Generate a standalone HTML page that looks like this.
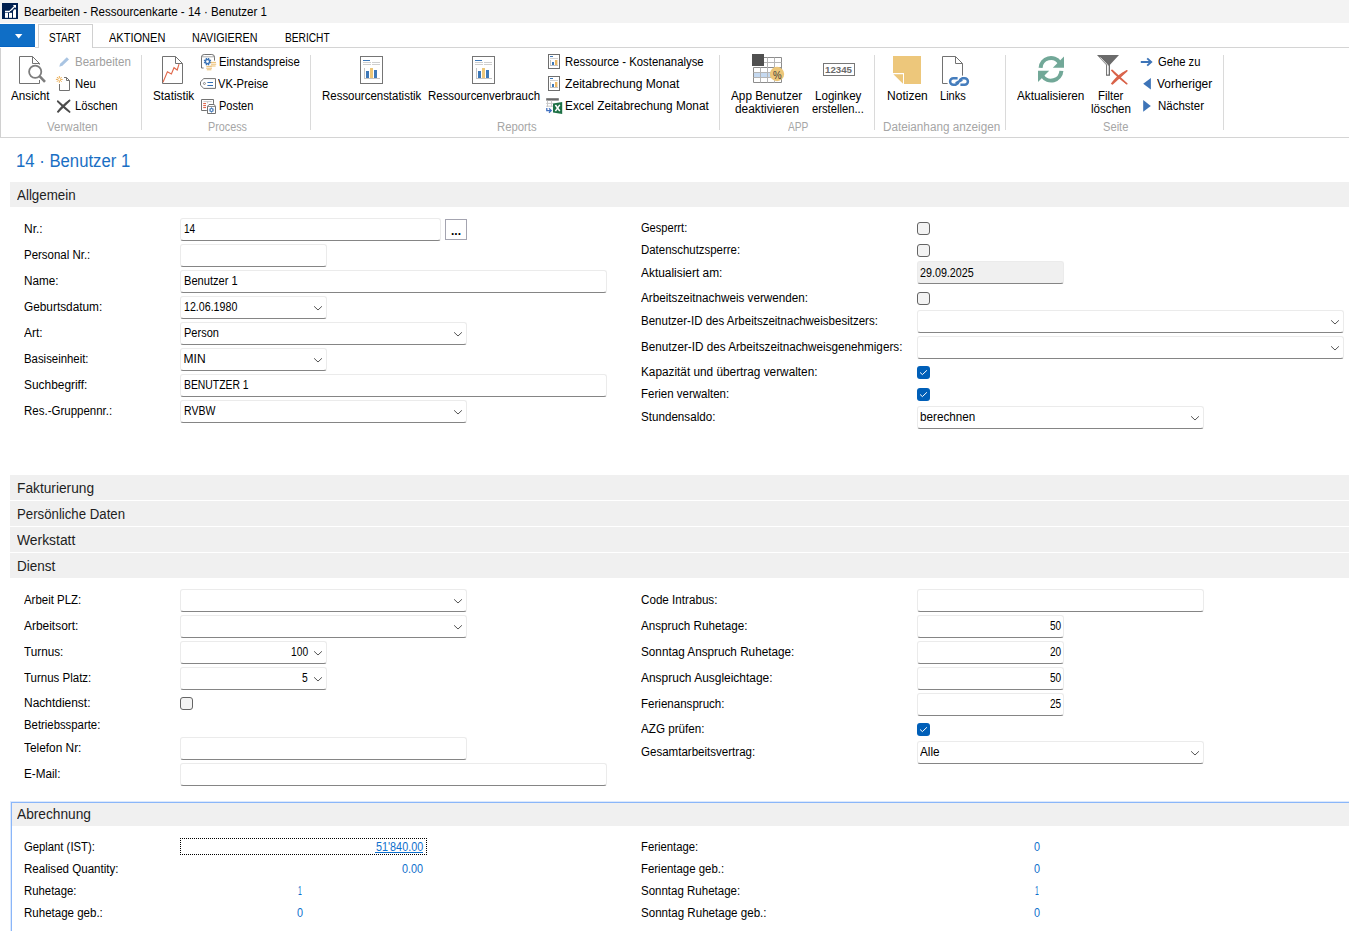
<!DOCTYPE html>
<html lang="de"><head><meta charset="utf-8"><title>Bearbeiten - Ressourcenkarte - 14 · Benutzer 1</title>
<style>
html,body{margin:0;padding:0;background:#fff;}
body{width:1349px;height:931px;position:relative;overflow:hidden;font-family:"Liberation Sans",sans-serif;}
.a{position:absolute;box-sizing:border-box;}
.t{position:absolute;white-space:pre;transform-origin:0 50%;display:block;}
.f{position:absolute;box-sizing:border-box;background:#fff;border:1px solid #ebebeb;border-bottom:1px solid #858585;border-radius:3px;}
.cb{position:absolute;box-sizing:border-box;width:13px;height:13px;border:1px solid #646464;border-radius:3px;background:#f3f3f3;}
.cbc{position:absolute;box-sizing:border-box;width:13px;height:13px;border-radius:3px;background:#005fb8;}
svg{position:absolute;overflow:visible;}
</style></head>
<body>
<div class="a" style="left:0px;top:0px;width:1349px;height:23px;background:#f3f3f3;"></div>
<svg style="left:2px;top:3px" width="16" height="16" viewBox="0 0 16 16"><rect width="16" height="16" fill="#002050"/><rect x="3" y="9.8" width="3" height="5" fill="#fff"/><rect x="7" y="9.8" width="3" height="5" fill="#fff"/><rect x="11" y="6.4" width="3" height="8.4" fill="#fff"/><path d="M3 8.5 H7.6 L12.8 3.2" stroke="#fff" stroke-width="1.3" fill="none"/><path d="M10.8 2 H14 V5.2 Z" fill="#fff"/><path d="M7.6 9.4 L9.4 7.6 M10.6 8.4 L11.8 5.6" stroke="#002050" stroke-width="0.9" fill="none"/></svg>
<span class="t" style="left:23.60px;top:4px;font-size:12px;line-height:17px;color:#000;transform:scaleX(0.9637);">Bearbeiten - Ressourcenkarte - 14 · Benutzer 1</span>
<div class="a" style="left:35px;top:47px;width:1314px;height:1px;background:#d4d4d4;"></div>
<div class="a" style="left:0px;top:24px;width:35px;height:23px;background:#0f6ec6;border-bottom:1px solid #0563c1;"></div>
<svg style="left:15px;top:34px" width="7.4" height="4.6" viewBox="0 0 7.4 4.6"><path d="M0 0 H7.4 L3.7 4.6 Z" fill="#fff"/></svg>
<div class="a" style="left:38px;top:24px;width:55px;height:24px;background:#fff;border:1px solid #d0d0d0;border-bottom:none;"></div>
<span class="t" style="left:49.20px;top:29px;font-size:13px;line-height:18px;color:#000;transform:scaleX(0.7681);">START</span>
<span class="t" style="left:108.60px;top:29px;font-size:13px;line-height:18px;color:#000;transform:scaleX(0.8488);">AKTIONEN</span>
<span class="t" style="left:192.20px;top:29px;font-size:13px;line-height:18px;color:#000;transform:scaleX(0.8258);">NAVIGIEREN</span>
<span class="t" style="left:285.00px;top:29px;font-size:13px;line-height:18px;color:#000;transform:scaleX(0.7818);">BERICHT</span>
<div class="a" style="left:0px;top:48px;width:1px;height:90px;background:#d0d0d0;"></div>
<div class="a" style="left:0px;top:137px;width:1349px;height:1px;background:#d4d4d4;"></div>
<div class="a" style="left:141px;top:55px;width:1px;height:75px;background:#dadada;"></div>
<div class="a" style="left:310px;top:55px;width:1px;height:75px;background:#dadada;"></div>
<div class="a" style="left:719px;top:55px;width:1px;height:75px;background:#dadada;"></div>
<div class="a" style="left:874px;top:55px;width:1px;height:75px;background:#dadada;"></div>
<div class="a" style="left:1005px;top:55px;width:1px;height:75px;background:#dadada;"></div>
<div class="a" style="left:1223px;top:55px;width:1px;height:75px;background:#dadada;"></div>
<span class="t" style="left:46.60px;top:119px;font-size:12px;line-height:17px;color:#a6a6a6;transform:scaleX(0.9639);">Verwalten</span>
<span class="t" style="left:208.00px;top:119px;font-size:12px;line-height:17px;color:#a6a6a6;transform:scaleX(0.8997);">Process</span>
<span class="t" style="left:496.60px;top:119px;font-size:12px;line-height:17px;color:#a6a6a6;transform:scaleX(0.9429);">Reports</span>
<span class="t" style="left:788.20px;top:119px;font-size:12px;line-height:17px;color:#a6a6a6;transform:scaleX(0.8500);">APP</span>
<span class="t" style="left:882.80px;top:119px;font-size:12px;line-height:17px;color:#a6a6a6;transform:scaleX(0.9759);">Dateianhang anzeigen</span>
<span class="t" style="left:1103.00px;top:119px;font-size:12px;line-height:17px;color:#a6a6a6;transform:scaleX(0.9287);">Seite</span>
<span class="t" style="left:11.40px;top:88px;font-size:12px;line-height:17px;color:#000;transform:scaleX(0.9759);">Ansicht</span>
<span class="t" style="left:74.60px;top:54px;font-size:12px;line-height:17px;color:#a0a0a0;transform:scaleX(0.9612);">Bearbeiten</span>
<span class="t" style="left:74.60px;top:76px;font-size:12px;line-height:17px;color:#000;transform:scaleX(0.9455);">Neu</span>
<span class="t" style="left:74.60px;top:98px;font-size:12px;line-height:17px;color:#000;transform:scaleX(0.9350);">Löschen</span>
<span class="t" style="left:152.80px;top:88px;font-size:12px;line-height:17px;color:#000;transform:scaleX(0.9798);">Statistik</span>
<span class="t" style="left:218.60px;top:54px;font-size:12px;line-height:17px;color:#000;transform:scaleX(0.9461);">Einstandspreise</span>
<span class="t" style="left:218.20px;top:76px;font-size:12px;line-height:17px;color:#000;transform:scaleX(0.9296);">VK-Preise</span>
<span class="t" style="left:218.60px;top:98px;font-size:12px;line-height:17px;color:#000;transform:scaleX(0.9210);">Posten</span>
<span class="t" style="left:322.20px;top:88px;font-size:12px;line-height:17px;color:#000;transform:scaleX(0.9549);">Ressourcenstatistik</span>
<span class="t" style="left:428.40px;top:88px;font-size:12px;line-height:17px;color:#000;transform:scaleX(0.9540);">Ressourcenverbrauch</span>
<span class="t" style="left:564.80px;top:54px;font-size:12px;line-height:17px;color:#000;transform:scaleX(0.9445);">Ressource - Kostenanalyse</span>
<span class="t" style="left:564.60px;top:76px;font-size:12px;line-height:17px;color:#000;transform:scaleX(1.0088);">Zeitabrechung Monat</span>
<span class="t" style="left:565.00px;top:98px;font-size:12px;line-height:17px;color:#000;transform:scaleX(0.9843);">Excel Zeitabrechung Monat</span>
<span class="t" style="left:731.20px;top:88px;font-size:12px;line-height:17px;color:#000;transform:scaleX(0.9794);">App Benutzer</span>
<span class="t" style="left:735.20px;top:101px;font-size:12px;line-height:17px;color:#000;transform:scaleX(0.9892);">deaktivieren</span>
<span class="t" style="left:814.60px;top:88px;font-size:12px;line-height:17px;color:#000;transform:scaleX(0.9657);">Loginkey</span>
<span class="t" style="left:812.20px;top:101px;font-size:12px;line-height:17px;color:#000;transform:scaleX(0.9359);">erstellen...</span>
<span class="t" style="left:886.80px;top:88px;font-size:12px;line-height:17px;color:#000;transform:scaleX(1.0025);">Notizen</span>
<span class="t" style="left:940.20px;top:88px;font-size:12px;line-height:17px;color:#000;transform:scaleX(0.9214);">Links</span>
<span class="t" style="left:1017.00px;top:88px;font-size:12px;line-height:17px;color:#000;transform:scaleX(0.9811);">Aktualisieren</span>
<span class="t" style="left:1097.60px;top:88px;font-size:12px;line-height:17px;color:#000;transform:scaleX(0.9531);">Filter</span>
<span class="t" style="left:1091.20px;top:101px;font-size:12px;line-height:17px;color:#000;transform:scaleX(0.9674);">löschen</span>
<span class="t" style="left:1157.60px;top:54px;font-size:12px;line-height:17px;color:#000;transform:scaleX(0.9350);">Gehe zu</span>
<span class="t" style="left:1157.40px;top:76px;font-size:12px;line-height:17px;color:#000;transform:scaleX(0.9973);">Vorheriger</span>
<span class="t" style="left:1157.60px;top:98px;font-size:12px;line-height:17px;color:#000;transform:scaleX(0.9583);">Nächster</span>
<svg style="left:0px;top:0px" width="1349" height="140" viewBox="0 0 1349 140">
<g fill="none" stroke="#727272" stroke-width="1">
<path d="M39.5 64.5 V63.5 L32.5 56.5 H19.5 V83.5 H39.5 V80"/>
<path d="M32.5 56.5 V63.5 H39.5"/>
</g>
<circle cx="35.2" cy="71.8" r="6.1" fill="#fff" stroke="#7d7d7d" stroke-width="1.8"/>
<path d="M39.8 76.4 L45 81.8" stroke="#7d7d7d" stroke-width="2.6" fill="none"/>
<!-- pencil -->
<path d="M61 65 L67.9 58.3" stroke="#a9c4e2" stroke-width="3.1" fill="none"/>
<path d="M59.3 66.7 L60.2 63.6 L62.4 65.8 Z" fill="#a9c4e2"/>
<!-- Neu -->
<path d="M59.5 84 V90.5 H69.5 V80.5 L66.5 77.5 H64" fill="none" stroke="#727272" stroke-width="1"/>
<path d="M66.5 77.5 V80.5 H69.5" fill="none" stroke="#727272" stroke-width="1"/>
<g stroke="#e8a33d" stroke-width="0.9" fill="none"><path d="M59.3 76 V82.8 M55.9 79.4 H62.7 M56.9 77 L61.7 81.8 M61.7 77 L56.9 81.8"/></g>
<circle cx="59.3" cy="79.4" r="1.1" fill="#fff"/>
<!-- Loeschen X -->
<path d="M57.6 100.2 C61 103.5 66 108 70.6 112.4 L69.4 112.8 C65 109.5 60.5 105.5 56.8 101.4 Z" fill="#4d4d4d"/>
<path d="M70.4 100 C66.5 103.5 61.5 108 58.6 112.6 L56.8 112.2 C59.5 108 64.5 103 69.6 99.6 Z" fill="#4d4d4d"/>
<path d="M57.4 100.8 L70 112.2" stroke="#4d4d4d" stroke-width="1.6"/>
<path d="M70 100.2 L57.6 112.2" stroke="#4d4d4d" stroke-width="1.8"/>

<!-- Statistik -->
<g fill="none" stroke="#727272" stroke-width="1">
<path d="M162.5 56.5 H175.5 L182.5 63.5 V83.5 H162.5 Z"/>
<path d="M175.5 56.5 V63.5 H182.5"/>
</g>
<path d="M163 82.3 L167.4 71.8 L171.4 74 L174 67.7 L177.2 70 L179 64.2" fill="none" stroke="#e0674a" stroke-width="1.1"/>

<!-- Einstandspreise -->
<path d="M203.6 68 H201.5 V57.2 Q201.5 54.5 204.2 54.5 H211.8 Q214.5 54.5 214.5 57.2 V60.6" fill="none" stroke="#727272" stroke-width="1"/>
<path d="M201.5 56.8 H214.5" stroke="#727272" stroke-width="0.6" fill="none"/>
<circle cx="207.5" cy="61.6" r="2.1" fill="none" stroke="#3c74b6" stroke-width="1.4"/>
<g stroke="#3c74b6" stroke-width="1.3"><path d="M206.4 58 V59.6 M208.6 58 V59.6 M206.4 63.6 V65.2 M208.6 63.6 V65.2 M203.9 60.5 H205.5 M203.9 62.7 H205.5 M209.5 60.5 H211.1 M209.5 62.7 H211.1"/></g>
<g stroke="#e9b55f" stroke-width="0.9" fill="none"><path d="M210.6 62.4 H216 M211 64.2 H216.2 M210.6 66 H215.6 M206.4 66.4 H211.6 M206.2 68.2 H212 M206.8 69.8 H211.4"/></g>

<!-- VK-Preise tag -->
<path d="M200.5 81.8 L203.8 78.6 H215.5 V88.4 H203.8 L200.5 85.2 Z" fill="none" stroke="#727272" stroke-width="1" stroke-linejoin="round"/>
<circle cx="204.4" cy="83.5" r="1" fill="none" stroke="#727272" stroke-width="0.8"/>
<path d="M207.4 82.5 H213 M207.4 85.5 H213" stroke="#3570b4" stroke-width="1" fill="none"/>

<!-- Posten -->
<path d="M206.8 110.5 H201.5 V99.5 H213.5 V103.8" fill="none" stroke="#727272" stroke-width="1"/>
<path d="M203.4 101.6 H211.6" stroke="#bdbdbd" stroke-width="0.8"/>
<path d="M207.6 101.6 V103.4" stroke="#bdbdbd" stroke-width="0.8"/>
<path d="M203.2 103.6 H206 M203.2 105.6 H206 M203.2 107.6 H206" stroke="#e05a3c" stroke-width="1"/>
<path d="M207.5 113.5 V106.4 L209 104.5 H214.2 L215.5 106.4 V113.5 Z" fill="#fff" stroke="#727272" stroke-width="1"/>
<path d="M207.5 106.5 H215.5" stroke="#727272" stroke-width="0.8"/>
<circle cx="211.5" cy="110" r="1.5" fill="none" stroke="#3c74b6" stroke-width="1.1"/>
<g stroke="#3c74b6" stroke-width="0.9"><path d="M211.5 107.4 V108.2 M211.5 111.8 V112.6 M208.9 110 H209.7 M213.3 110 H214.1 M209.7 108.2 L210.2 108.7 M213.3 108.2 L212.8 108.7 M209.7 111.8 L210.2 111.3 M213.3 111.8 L212.8 111.3"/></g>
</svg>
<svg style="left:360px;top:56px" width="23" height="28" viewBox="0 0 23 28"><rect x="0.5" y="0.5" width="22" height="27" fill="#fff" stroke="#757575" stroke-width="1"/>
<rect x="3" y="4" width="7" height="1" fill="#3d78b8"/>
<rect x="3" y="6" width="8" height="1" fill="#cfcfcf"/><rect x="12" y="6" width="8" height="1" fill="#cfcfcf"/>
<rect x="3" y="8" width="8" height="1" fill="#cfcfcf"/><rect x="12" y="8" width="8" height="1" fill="#cfcfcf"/>
<rect x="4" y="12" width="1" height="11" fill="#c4c4c4"/><rect x="4" y="22" width="16" height="1" fill="#c4c4c4"/>
<rect x="6" y="15" width="3" height="7" fill="#3d78b8"/><rect x="10" y="12" width="3" height="10" fill="#ecc678"/><rect x="14" y="14" width="3" height="8" fill="#3d78b8"/></svg>
<svg style="left:472px;top:56px" width="23" height="28" viewBox="0 0 23 28"><rect x="0.5" y="0.5" width="22" height="27" fill="#fff" stroke="#757575" stroke-width="1"/>
<rect x="3" y="4" width="7" height="1" fill="#3d78b8"/>
<rect x="3" y="6" width="8" height="1" fill="#cfcfcf"/><rect x="12" y="6" width="8" height="1" fill="#cfcfcf"/>
<rect x="3" y="8" width="8" height="1" fill="#cfcfcf"/><rect x="12" y="8" width="8" height="1" fill="#cfcfcf"/>
<rect x="4" y="12" width="1" height="11" fill="#c4c4c4"/><rect x="4" y="22" width="16" height="1" fill="#c4c4c4"/>
<rect x="6" y="15" width="3" height="7" fill="#3d78b8"/><rect x="10" y="12" width="3" height="10" fill="#ecc678"/><rect x="14" y="14" width="3" height="8" fill="#3d78b8"/></svg>
<svg style="left:548px;top:54px" width="12" height="15" viewBox="0 0 12 15"><rect x="0.5" y="0.5" width="11" height="14" fill="#fff" stroke="#6e6e6e" stroke-width="1"/>
<rect x="2" y="2" width="3" height="1" fill="#3d78b8"/>
<rect x="2" y="4" width="8" height="1" fill="#d2d2d2"/>
<rect x="2" y="6" width="1" height="6" fill="#c4c4c4"/><rect x="2" y="11" width="8" height="1" fill="#c4c4c4"/>
<rect x="4" y="8" width="2" height="3" fill="#3d78b8"/><rect x="7" y="6" width="2.4" height="5" fill="#ecb866"/></svg>
<svg style="left:548px;top:76px" width="12" height="15" viewBox="0 0 12 15"><rect x="0.5" y="0.5" width="11" height="14" fill="#fff" stroke="#6e6e6e" stroke-width="1"/>
<rect x="2" y="2" width="3" height="1" fill="#3d78b8"/>
<rect x="2" y="4" width="8" height="1" fill="#d2d2d2"/>
<rect x="2" y="6" width="1" height="6" fill="#c4c4c4"/><rect x="2" y="11" width="8" height="1" fill="#c4c4c4"/>
<rect x="4" y="8" width="2" height="3" fill="#3d78b8"/><rect x="7" y="6" width="2.4" height="5" fill="#ecb866"/></svg>
<svg style="left:546px;top:98px" width="17" height="16" viewBox="0 0 17 16"><rect x="0.2" y="0.2" width="12.6" height="2.4" fill="#6a6a6a"/>
<path d="M1.5 2.6 V9 M5.5 2.6 V9 M0.2 5.4 H7 M0.2 8.2 H7" stroke="#c9c9c9" stroke-width="1" fill="none"/>
<path d="M0.8 10 V12.6 H5 M3 10.4 L5.2 12.6 L3 14.8" stroke="#3f6fc0" stroke-width="1.3" fill="none"/>
<path d="M7 5.4 L16.2 3.9 V15.9 L7 14.4 Z" fill="#1e7145"/>
<path d="M9.4 7 L13.8 13 M13.8 6.8 L9.4 13.2" stroke="#fff" stroke-width="1.5" fill="none"/></svg>
<svg style="left:752px;top:54px" width="33" height="30" viewBox="0 0 33 30"><g fill="none">
<path d="M12 3.5 H29.5 V28.5 H1.5 V13.5 H29.5" stroke="#8c8c8c" stroke-width="1"/>
<path d="M12 8.5 H29.5 M1.5 18.5 H29.5 M1.5 23.5 H29.5 M8.5 13.5 V28.5 M15.5 3.5 V28.5 M22.5 3.5 V28.5" stroke="#b5b5b5" stroke-width="1"/>
</g>
<rect x="2" y="19" width="6" height="4" fill="#c5d9f0"/><rect x="9" y="19" width="6" height="4" fill="#c5d9f0"/><rect x="16" y="19" width="3" height="4" fill="#c5d9f0"/>
<rect x="0" y="0" width="12" height="12" fill="#505050"/>
<circle cx="25" cy="20" r="7.2" fill="#ecc678"/></svg>
<span class="t" style="left:772.80px;top:68px;font-size:11px;line-height:15px;color:#3c3c3c;transform:scaleX(0.8776);">%</span>
<div class="a" style="left:823px;top:63px;width:32px;height:13px;border:1px solid #777;background:#fff;"></div>
<span class="t" style="left:825.20px;top:63px;font-size:9.5px;line-height:13px;color:#6a6a6a;transform:scaleX(1.0227);font-weight:bold;">12345</span>
<svg style="left:893px;top:56px" width="28" height="28" viewBox="0 0 28 28"><rect width="28" height="28" fill="#edc77b"/><path d="M0 17 H11 V28 H0 Z" fill="#fff"/><path d="M0.4 18.2 H10 V27.8 Z" fill="#edc77b"/></svg>
<svg style="left:940px;top:54px" width="32" height="34" viewBox="0 0 32 34"><g fill="none" stroke="#727272" stroke-width="1"><path d="M7.6 29.5 H2.5 V2.5 H15.5 L22.5 9.5 V21.6"/><path d="M15.5 2.5 V9.5 H22.5"/></g>
<g fill="none" stroke="#457dbd" stroke-width="2.5">
<path d="M17.6 24.2 H13.4 a3.3 3.3 0 0 0 0 6.6 H15.6 L18.6 28.8"/>
<path d="M20.4 30.8 H24.6 a3.3 3.3 0 0 0 0 -6.6 H22.4 L19.4 26.2"/>
<path d="M15.8 29.4 L22.2 25.6"/></g></svg>
<svg style="left:1037px;top:55px" width="28" height="28" viewBox="0 0 28 28"><g fill="none" stroke="#72a898" stroke-width="4">
<path d="M3.6 12.8 A10.4 10.4 0 0 1 22.6 7.6"/>
<path d="M24.4 15.8 A10.4 10.4 0 0 1 5.4 21"/>
</g>
<path d="M27 1.6 V12.8 H15.8 Z" fill="#72a898"/>
<path d="M1 27 V15.8 H12.2 Z" fill="#72a898"/></svg>
<svg style="left:1096px;top:54px" width="33" height="32" viewBox="0 0 33 32"><path d="M1 1 H23 L14 10.8 V21.8 H10 V10.8 Z" fill="#6b6b6b"/>
<path d="M11.3 11.4 V20.6 H12.7 V11.4" fill="#fff"/>
<path d="M4.2 3.4 L11.4 10.8 V20.4" fill="none" stroke="#fff" stroke-width="0.9"/>
<path d="M15.6 15.4 C20 19.5 26 25 31.8 30 L30.8 30.6 C25 26.5 19 21.5 15 16.6 Z" fill="#d9634a"/>
<path d="M31.8 16.6 C27 19.5 20.5 24.5 16.6 30.4 L14.8 30 C18 24.5 24.5 18.8 31.2 16 Z" fill="#d9634a"/>
<path d="M15.8 16 L31 30" stroke="#d9634a" stroke-width="1.6"/><path d="M31 16.6 L16 30" stroke="#d9634a" stroke-width="1.7"/></svg>
<svg style="left:1140px;top:56px" width="14" height="58" viewBox="0 0 14 58"><path d="M0.8 6 H11 M7.2 2.4 L11.2 6 L7.2 9.6" fill="none" stroke="#3d74b8" stroke-width="1.9"/>
<path d="M3.2 27.7 L10.9 22 V33.6 Z" fill="#3d74b8"/>
<path d="M3.2 44.1 V55.7 L10.8 49.9 Z" fill="#3d74b8"/></svg>
<span class="t" style="left:16.00px;top:149px;font-size:18px;line-height:25px;color:#1a6fc4;transform:scaleX(0.9277);">14 · Benutzer 1</span>
<div class="a" style="left:10px;top:182px;width:1339px;height:25px;background:#f0f0f0;"></div>
<span class="t" style="left:17.30px;top:185px;font-size:14px;line-height:20px;color:#1e1e1e;transform:scaleX(0.9545);">Allgemein</span>
<div class="a" style="left:10px;top:475px;width:1339px;height:25px;background:#f0f0f0;"></div>
<span class="t" style="left:17.30px;top:478px;font-size:14px;line-height:20px;color:#1e1e1e;transform:scaleX(0.9809);">Fakturierung</span>
<div class="a" style="left:10px;top:501px;width:1339px;height:25px;background:#f0f0f0;"></div>
<span class="t" style="left:17.30px;top:504px;font-size:14px;line-height:20px;color:#1e1e1e;transform:scaleX(0.9441);">Persönliche Daten</span>
<div class="a" style="left:10px;top:527px;width:1339px;height:25px;background:#f0f0f0;"></div>
<span class="t" style="left:17.30px;top:530px;font-size:14px;line-height:20px;color:#1e1e1e;transform:scaleX(0.9907);">Werkstatt</span>
<div class="a" style="left:10px;top:553px;width:1339px;height:25px;background:#f0f0f0;"></div>
<span class="t" style="left:17.30px;top:556px;font-size:14px;line-height:20px;color:#1e1e1e;transform:scaleX(0.9647);">Dienst</span>
<div class="a" style="left:10px;top:801px;width:1340px;height:131px;border:1px solid #dce9fd;border-right:none;border-bottom:none;"></div>
<div class="a" style="left:11px;top:802px;width:1339px;height:130px;border:1px solid #8ab6f9;border-right:none;border-bottom:none;"></div>
<div class="a" style="left:12px;top:803px;width:1337px;height:23px;background:#f0f0f0;"></div>
<span class="t" style="left:17.00px;top:804px;font-size:14px;line-height:20px;color:#1e1e1e;transform:scaleX(0.9801);">Abrechnung</span>
<span class="t" style="left:24.20px;top:221px;font-size:12px;line-height:17px;color:#000;transform:scaleX(0.9973);">Nr.:</span>
<span class="t" style="left:24.20px;top:247px;font-size:12px;line-height:17px;color:#000;transform:scaleX(0.9560);">Personal Nr.:</span>
<span class="t" style="left:24.20px;top:273px;font-size:12px;line-height:17px;color:#000;transform:scaleX(0.9760);">Name:</span>
<span class="t" style="left:24.20px;top:299px;font-size:12px;line-height:17px;color:#000;transform:scaleX(0.9861);">Geburtsdatum:</span>
<span class="t" style="left:24.20px;top:325px;font-size:12px;line-height:17px;color:#000;transform:scaleX(0.9973);">Art:</span>
<span class="t" style="left:24.20px;top:351px;font-size:12px;line-height:17px;color:#000;transform:scaleX(0.9478);">Basiseinheit:</span>
<span class="t" style="left:24.20px;top:377px;font-size:12px;line-height:17px;color:#000;transform:scaleX(0.9922);">Suchbegriff:</span>
<span class="t" style="left:24.20px;top:403px;font-size:12px;line-height:17px;color:#000;transform:scaleX(0.9582);">Res.-Gruppennr.:</span>
<div class="f" style="left:180px;top:218px;width:261px;height:23px;background:#fff;"></div>
<span class="t" style="left:183.60px;top:221px;font-size:12px;line-height:17px;color:#000;transform:scaleX(0.8390);">14</span>
<div class="a" style="left:445px;top:219px;width:22px;height:21px;border:1px solid #a4a4b0;background:#fff;"></div>
<span class="t" style="left:451.00px;top:223px;font-size:12px;line-height:17px;color:#000;transform:scaleX(1.0000);font-weight:bold;">...</span>
<div class="f" style="left:180px;top:244px;width:147px;height:23px;background:#fff;"></div>
<div class="f" style="left:180px;top:270px;width:427px;height:23px;background:#fff;"></div>
<span class="t" style="left:183.60px;top:273px;font-size:12px;line-height:17px;color:#000;transform:scaleX(0.9268);">Benutzer 1</span>
<div class="f" style="left:180px;top:296px;width:147px;height:23px;background:#fff;"></div>
<span class="t" style="left:183.60px;top:299px;font-size:12px;line-height:17px;color:#000;transform:scaleX(0.8876);">12.06.1980</span>
<svg style="left:314px;top:306px" width="8" height="5" viewBox="0 0 8 5"><path d="M0.1 0.3 L4 4 L7.9 0.3" fill="none" stroke="#555" stroke-width="1"/></svg>
<div class="f" style="left:180px;top:322px;width:287px;height:23px;background:#fff;"></div>
<span class="t" style="left:183.60px;top:325px;font-size:12px;line-height:17px;color:#000;transform:scaleX(0.9184);">Person</span>
<svg style="left:454px;top:332px" width="8" height="5" viewBox="0 0 8 5"><path d="M0.1 0.3 L4 4 L7.9 0.3" fill="none" stroke="#555" stroke-width="1"/></svg>
<div class="f" style="left:180px;top:348px;width:147px;height:23px;background:#fff;"></div>
<span class="t" style="left:183.60px;top:351px;font-size:12px;line-height:17px;color:#000;transform:scaleX(1.0000);">MIN</span>
<svg style="left:314px;top:358px" width="8" height="5" viewBox="0 0 8 5"><path d="M0.1 0.3 L4 4 L7.9 0.3" fill="none" stroke="#555" stroke-width="1"/></svg>
<div class="f" style="left:180px;top:374px;width:427px;height:23px;background:#fff;"></div>
<span class="t" style="left:183.60px;top:377px;font-size:12px;line-height:17px;color:#000;transform:scaleX(0.8648);">BENUTZER 1</span>
<div class="f" style="left:180px;top:400px;width:287px;height:23px;background:#fff;"></div>
<span class="t" style="left:183.60px;top:403px;font-size:12px;line-height:17px;color:#000;transform:scaleX(0.8771);">RVBW</span>
<svg style="left:454px;top:410px" width="8" height="5" viewBox="0 0 8 5"><path d="M0.1 0.3 L4 4 L7.9 0.3" fill="none" stroke="#555" stroke-width="1"/></svg>
<span class="t" style="left:641.30px;top:220px;font-size:12px;line-height:17px;color:#000;transform:scaleX(0.9240);">Gesperrt:</span>
<span class="t" style="left:641.30px;top:242px;font-size:12px;line-height:17px;color:#000;transform:scaleX(0.9524);">Datenschutzsperre:</span>
<span class="t" style="left:641.30px;top:265px;font-size:12px;line-height:17px;color:#000;transform:scaleX(0.9921);">Aktualisiert am:</span>
<span class="t" style="left:641.30px;top:290px;font-size:12px;line-height:17px;color:#000;transform:scaleX(0.9746);">Arbeitszeitnachweis verwenden:</span>
<span class="t" style="left:641.30px;top:313px;font-size:12px;line-height:17px;color:#000;transform:scaleX(0.9599);">Benutzer-ID des Arbeitszeitnachweisbesitzers:</span>
<span class="t" style="left:641.30px;top:339px;font-size:12px;line-height:17px;color:#000;transform:scaleX(0.9748);">Benutzer-ID des Arbeitszeitnachweisgenehmigers:</span>
<span class="t" style="left:641.30px;top:364px;font-size:12px;line-height:17px;color:#000;transform:scaleX(0.9836);">Kapazität und übertrag verwalten:</span>
<span class="t" style="left:641.30px;top:386px;font-size:12px;line-height:17px;color:#000;transform:scaleX(0.9582);">Ferien verwalten:</span>
<span class="t" style="left:641.30px;top:409px;font-size:12px;line-height:17px;color:#000;transform:scaleX(0.9694);">Stundensaldo:</span>
<div class="cb" style="left:917px;top:222px"></div>
<div class="cb" style="left:917px;top:244px"></div>
<div class="cb" style="left:917px;top:292px"></div>
<div class="cbc" style="left:917px;top:366px"><svg style="left:0;top:0" width="13" height="13" viewBox="0 0 13 13"><path d="M3.1 6.5 L5.4 8.6 L9.9 4.3" fill="none" stroke="#fff" stroke-width="1"/></svg></div>
<div class="cbc" style="left:917px;top:388px"><svg style="left:0;top:0" width="13" height="13" viewBox="0 0 13 13"><path d="M3.1 6.5 L5.4 8.6 L9.9 4.3" fill="none" stroke="#fff" stroke-width="1"/></svg></div>
<div class="f" style="left:917px;top:261px;width:147px;height:23px;background:#f0f0f0;"></div>
<span class="t" style="left:920.20px;top:265px;font-size:12px;line-height:17px;color:#000;transform:scaleX(0.8943);">29.09.2025</span>
<div class="f" style="left:917px;top:310px;width:427px;height:23px;background:#fff;"></div>
<svg style="left:1331px;top:320px" width="8" height="5" viewBox="0 0 8 5"><path d="M0.1 0.3 L4 4 L7.9 0.3" fill="none" stroke="#555" stroke-width="1"/></svg>
<div class="f" style="left:917px;top:336px;width:427px;height:23px;background:#fff;"></div>
<svg style="left:1331px;top:346px" width="8" height="5" viewBox="0 0 8 5"><path d="M0.1 0.3 L4 4 L7.9 0.3" fill="none" stroke="#555" stroke-width="1"/></svg>
<div class="f" style="left:917px;top:406px;width:287px;height:23px;background:#fff;"></div>
<span class="t" style="left:920.40px;top:409px;font-size:12px;line-height:17px;color:#000;transform:scaleX(0.9735);">berechnen</span>
<svg style="left:1191px;top:416px" width="8" height="5" viewBox="0 0 8 5"><path d="M0.1 0.3 L4 4 L7.9 0.3" fill="none" stroke="#555" stroke-width="1"/></svg>
<span class="t" style="left:24.20px;top:592px;font-size:12px;line-height:17px;color:#000;transform:scaleX(0.9525);">Arbeit PLZ:</span>
<span class="t" style="left:24.20px;top:618px;font-size:12px;line-height:17px;color:#000;transform:scaleX(0.9945);">Arbeitsort:</span>
<span class="t" style="left:24.20px;top:644px;font-size:12px;line-height:17px;color:#000;transform:scaleX(0.9764);">Turnus:</span>
<span class="t" style="left:24.20px;top:670px;font-size:12px;line-height:17px;color:#000;transform:scaleX(0.9580);">Turnus Platz:</span>
<span class="t" style="left:24.20px;top:695px;font-size:12px;line-height:17px;color:#000;transform:scaleX(0.9970);">Nachtdienst:</span>
<span class="t" style="left:24.20px;top:717px;font-size:12px;line-height:17px;color:#000;transform:scaleX(0.9455);">Betriebssparte:</span>
<span class="t" style="left:24.20px;top:740px;font-size:12px;line-height:17px;color:#000;transform:scaleX(0.9888);">Telefon Nr:</span>
<span class="t" style="left:24.20px;top:766px;font-size:12px;line-height:17px;color:#000;transform:scaleX(0.9772);">E-Mail:</span>
<div class="f" style="left:180px;top:589px;width:287px;height:23px;background:#fff;"></div>
<svg style="left:454px;top:599px" width="8" height="5" viewBox="0 0 8 5"><path d="M0.1 0.3 L4 4 L7.9 0.3" fill="none" stroke="#555" stroke-width="1"/></svg>
<div class="f" style="left:180px;top:615px;width:287px;height:23px;background:#fff;"></div>
<svg style="left:454px;top:625px" width="8" height="5" viewBox="0 0 8 5"><path d="M0.1 0.3 L4 4 L7.9 0.3" fill="none" stroke="#555" stroke-width="1"/></svg>
<div class="f" style="left:180px;top:641px;width:147px;height:23px;background:#fff;"></div>
<span class="t" style="left:290.60px;top:644px;font-size:12px;line-height:17px;color:#000;transform:scaleX(0.8550);">100</span>
<svg style="left:314px;top:651px" width="8" height="5" viewBox="0 0 8 5"><path d="M0.1 0.3 L4 4 L7.9 0.3" fill="none" stroke="#555" stroke-width="1"/></svg>
<div class="f" style="left:180px;top:667px;width:147px;height:23px;background:#fff;"></div>
<span class="t" style="left:302.00px;top:670px;font-size:12px;line-height:17px;color:#000;transform:scaleX(0.8571);">5</span>
<svg style="left:314px;top:677px" width="8" height="5" viewBox="0 0 8 5"><path d="M0.1 0.3 L4 4 L7.9 0.3" fill="none" stroke="#555" stroke-width="1"/></svg>
<div class="cb" style="left:180px;top:697px"></div>
<div class="f" style="left:180px;top:737px;width:287px;height:23px;background:#fff;"></div>
<div class="f" style="left:180px;top:763px;width:427px;height:23px;background:#fff;"></div>
<span class="t" style="left:641.30px;top:592px;font-size:12px;line-height:17px;color:#000;transform:scaleX(0.9708);">Code Intrabus:</span>
<span class="t" style="left:641.30px;top:618px;font-size:12px;line-height:17px;color:#000;transform:scaleX(0.9726);">Anspruch Ruhetage:</span>
<span class="t" style="left:641.30px;top:644px;font-size:12px;line-height:17px;color:#000;transform:scaleX(0.9777);">Sonntag Anspruch Ruhetage:</span>
<span class="t" style="left:641.30px;top:670px;font-size:12px;line-height:17px;color:#000;transform:scaleX(0.9962);">Anspruch Ausgleichtage:</span>
<span class="t" style="left:641.30px;top:696px;font-size:12px;line-height:17px;color:#000;transform:scaleX(0.9631);">Ferienanspruch:</span>
<span class="t" style="left:641.30px;top:721px;font-size:12px;line-height:17px;color:#000;transform:scaleX(0.9717);">AZG prüfen:</span>
<span class="t" style="left:641.30px;top:744px;font-size:12px;line-height:17px;color:#000;transform:scaleX(0.9621);">Gesamtarbeitsvertrag:</span>
<div class="f" style="left:917px;top:589px;width:287px;height:23px;background:#fff;"></div>
<div class="f" style="left:917px;top:615px;width:147px;height:23px;background:#fff;"></div>
<span class="t" style="left:1049.60px;top:618px;font-size:12px;line-height:17px;color:#000;transform:scaleX(0.8390);">50</span>
<div class="f" style="left:917px;top:641px;width:147px;height:23px;background:#fff;"></div>
<span class="t" style="left:1049.60px;top:644px;font-size:12px;line-height:17px;color:#000;transform:scaleX(0.8390);">20</span>
<div class="f" style="left:917px;top:667px;width:147px;height:23px;background:#fff;"></div>
<span class="t" style="left:1049.60px;top:670px;font-size:12px;line-height:17px;color:#000;transform:scaleX(0.8390);">50</span>
<div class="f" style="left:917px;top:693px;width:147px;height:23px;background:#fff;"></div>
<span class="t" style="left:1049.60px;top:696px;font-size:12px;line-height:17px;color:#000;transform:scaleX(0.8390);">25</span>
<div class="cbc" style="left:917px;top:723px"><svg style="left:0;top:0" width="13" height="13" viewBox="0 0 13 13"><path d="M3.1 6.5 L5.4 8.6 L9.9 4.3" fill="none" stroke="#fff" stroke-width="1"/></svg></div>
<div class="f" style="left:917px;top:741px;width:287px;height:23px;background:#fff;"></div>
<span class="t" style="left:920.40px;top:744px;font-size:12px;line-height:17px;color:#000;transform:scaleX(0.9800);">Alle</span>
<svg style="left:1191px;top:751px" width="8" height="5" viewBox="0 0 8 5"><path d="M0.1 0.3 L4 4 L7.9 0.3" fill="none" stroke="#555" stroke-width="1"/></svg>
<span class="t" style="left:24.20px;top:839px;font-size:12px;line-height:17px;color:#000;transform:scaleX(0.9396);">Geplant (IST):</span>
<span class="t" style="left:24.20px;top:861px;font-size:12px;line-height:17px;color:#000;transform:scaleX(0.9638);">Realised Quantity:</span>
<span class="t" style="left:24.20px;top:883px;font-size:12px;line-height:17px;color:#000;transform:scaleX(0.9477);">Ruhetage:</span>
<span class="t" style="left:24.20px;top:905px;font-size:12px;line-height:17px;color:#000;transform:scaleX(0.9604);">Ruhetage geb.:</span>
<div class="a" style="left:180px;top:838px;width:247px;height:17px;border:1px dotted #000;"></div>
<span class="t" style="left:375.90px;top:839px;font-size:12px;line-height:17px;color:#0f6fcc;transform:scaleX(0.9016);">51&#x27;840.00</span>
<div class="a" style="left:375px;top:852px;width:48px;height:1px;background:#0f6fcc;"></div>
<span class="t" style="left:402.00px;top:861px;font-size:12px;line-height:17px;color:#0f6fcc;transform:scaleX(0.9036);">0.00</span>
<span class="t" style="left:297.90px;top:883px;font-size:12px;line-height:17px;color:#0f6fcc;transform:scaleX(0.5714);">1</span>
<span class="t" style="left:297.10px;top:905px;font-size:12px;line-height:17px;color:#0f6fcc;transform:scaleX(0.9023);">0</span>
<span class="t" style="left:641.30px;top:839px;font-size:12px;line-height:17px;color:#000;transform:scaleX(0.9407);">Ferientage:</span>
<span class="t" style="left:641.30px;top:861px;font-size:12px;line-height:17px;color:#000;transform:scaleX(0.9508);">Ferientage geb.:</span>
<span class="t" style="left:641.30px;top:883px;font-size:12px;line-height:17px;color:#000;transform:scaleX(0.9584);">Sonntag Ruhetage:</span>
<span class="t" style="left:641.30px;top:905px;font-size:12px;line-height:17px;color:#000;transform:scaleX(0.9646);">Sonntag Ruhetage geb.:</span>
<span class="t" style="left:1034.20px;top:839px;font-size:12px;line-height:17px;color:#0f6fcc;transform:scaleX(0.9023);">0</span>
<span class="t" style="left:1034.20px;top:861px;font-size:12px;line-height:17px;color:#0f6fcc;transform:scaleX(0.9023);">0</span>
<span class="t" style="left:1034.90px;top:883px;font-size:12px;line-height:17px;color:#0f6fcc;transform:scaleX(0.5714);">1</span>
<span class="t" style="left:1034.20px;top:905px;font-size:12px;line-height:17px;color:#0f6fcc;transform:scaleX(0.9023);">0</span>
</body></html>
